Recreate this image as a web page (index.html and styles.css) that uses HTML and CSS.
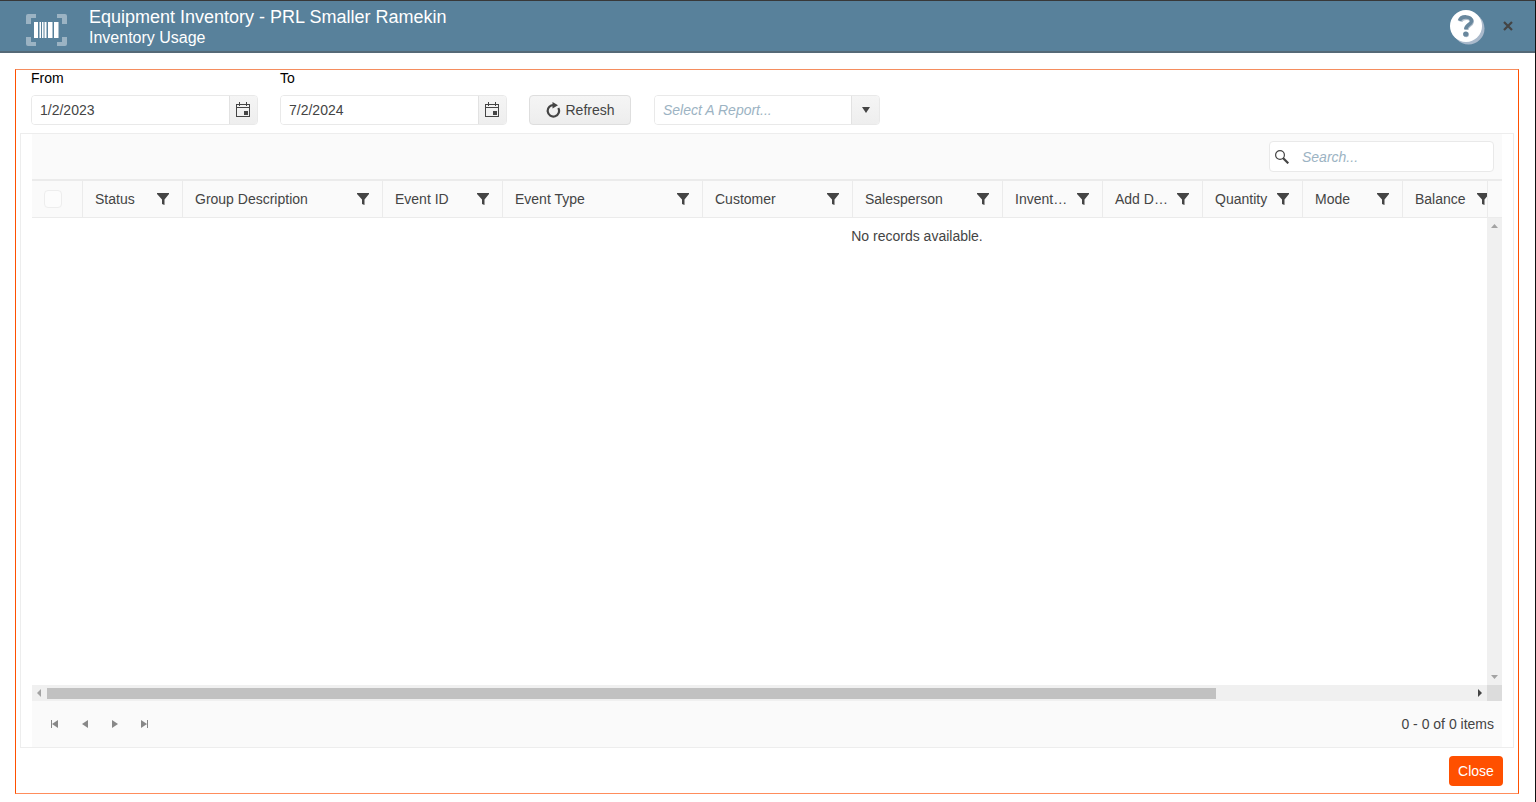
FILE: index.html
```html
<!DOCTYPE html>
<html lang="en">
<head>
<meta charset="utf-8">
<title>Equipment Inventory - Inventory Usage</title>
<link rel="stylesheet" href="styles.css">
</head>
<body>
<svg class="sprite" aria-hidden="true">
  <symbol id="filter" viewBox="0 0 12 12"><path d="M0 0h12v1L7.500 6.500V12L5 11V6.500L0 1z"/></symbol>
  <symbol id="calendar" viewBox="0 0 14 16"><path fill-rule="evenodd" d="M0 2h3V0h1V2h6V0h1V2H14v13H0zM1 3v2h12V3h-2v1h-1V3H4v1H3V3zM1 6v8h12V6zM8 9h4v4H8z"/></symbol>
  <symbol id="left" viewBox="0 0 6 8"><path d="M6 0v8L0 4z"/></symbol>
  <symbol id="right" viewBox="0 0 6 8"><path d="M0 0v8l6-4z"/></symbol>
</svg>
<div class="window">
  <header class="titlebar">
    <svg class="barcode" viewBox="0 0 41 33" aria-hidden="true">
      <path class="corners" d="M0 10V2q0-2 2-2h8v4H5v6zM31 0h8q2 0 2 2v8h-5V4h-5zM0 23h5v5h5v4H2q-2 0-2-2zM36 23h5v7q0 2-2 2h-8v-4h5z"/>
      <path fill="#fff" d="M8 8h4v16H8zM13.500 8H15v16h-1.500zM16 8h1.500v16H16zM18.500 8h2v16h-2zM22 8h4.500v16H22zM28 8h4.500v16H28z"/>
    </svg>
    <div class="titles">
      <h1 class="title">Equipment Inventory - PRL Smaller Ramekin</h1>
      <p class="subtitle">Inventory Usage</p>
    </div>
    <button class="icon-button help" type="button" aria-label="Help">
      <svg width="35" height="35" viewBox="0 0 35 35">
        <circle cx="18.500" cy="18.500" r="16" fill="#a9b9cb"/>
        <circle cx="16" cy="16" r="16" fill="#fff"/>
        <path d="M10.500 11.500c1.500-5 12-4.500 11.500.500-.5 3.500-5.500 3-5.500 8" fill="none" stroke="#b3c0cd" stroke-width="4"/>
        <path d="M9.500 10.800c1.500-5.500 12.500-5 12 .500-.5 3.500-5.700 3.200-5.700 8" fill="none" stroke="#68879d" stroke-width="3.600"/>
        <circle cx="16.300" cy="24.500" r="2.700" fill="#b3c0cd"/>
        <circle cx="15.700" cy="24" r="2.600" fill="#68879d"/>
      </svg>
    </button>
    <button class="icon-button dismiss" type="button" aria-label="Close window">
      <svg width="10" height="10" viewBox="0 0 10 10"><path d="M1 1l8 8M9 1L1 9" stroke="#444" stroke-width="2.200"/></svg>
    </button>
  </header>

  <main class="panel">
    <form class="criteria">
      <div class="field">
        <label for="from">From</label>
        <div class="picker">
          <input id="from" type="text" value="1/2/2023">
          <button type="button" aria-label="Choose from date"><svg width="14" height="16"><use href="#calendar"/></svg></button>
        </div>
      </div>
      <div class="field">
        <label for="to">To</label>
        <div class="picker">
          <input id="to" type="text" value="7/2/2024">
          <button type="button" aria-label="Choose to date"><svg width="14" height="16"><use href="#calendar"/></svg></button>
        </div>
      </div>
      <button class="refresh" type="button">
        <svg width="16" height="16" viewBox="0 0 16 16"><path d="M9 3.200A5.700 5.700 0 1 0 13.300 6" fill="none" stroke="#444" stroke-width="2.200"/><path d="M7.500 0l5.500 3.200-5.500 3.300z"/></svg>
        Refresh
      </button>
      <div class="picker report">
        <select aria-label="Report"><option>Select A Report...</option></select>
        <span class="caret" aria-hidden="true"><svg width="8" height="6" viewBox="0 0 8 6"><path d="M0 0h8L4 6z"/></svg></span>
      </div>
    </form>

    <section class="grid">
      <div class="toolbar">
        <div class="search">
          <svg width="14" height="14" viewBox="0 0 14 14"><circle cx="5" cy="5" r="4.400" fill="none" stroke="#444" stroke-width="1.200"/><path d="M8 8l5.300 5.300" stroke="#444" stroke-width="2.200"/></svg>
          <input type="search" placeholder="Search..." aria-label="Search">
        </div>
      </div>
      <div class="viewport">
        <div class="content">
          <table class="records">
            <colgroup><col class="w50"><col class="w100"><col class="w200"><col class="w120"><col class="w200"><col class="w150"><col class="w150"><col class="w100"><col class="w100"><col class="w100"><col class="w100"><col class="w100"><col class="w300"></colgroup>
            <thead>
              <tr>
                <th><input class="check" type="checkbox" aria-label="Select all"></th>
                <th><div class="head"><span>Status</span><svg><use href="#filter"/></svg></div></th>
                <th><div class="head"><span>Group Description</span><svg><use href="#filter"/></svg></div></th>
                <th><div class="head"><span>Event ID</span><svg><use href="#filter"/></svg></div></th>
                <th><div class="head"><span>Event Type</span><svg><use href="#filter"/></svg></div></th>
                <th><div class="head"><span>Customer</span><svg><use href="#filter"/></svg></div></th>
                <th><div class="head"><span>Salesperson</span><svg><use href="#filter"/></svg></div></th>
                <th><div class="head"><span>Invent…</span><svg><use href="#filter"/></svg></div></th>
                <th><div class="head"><span>Add D…</span><svg><use href="#filter"/></svg></div></th>
                <th><div class="head"><span>Quantity</span><svg><use href="#filter"/></svg></div></th>
                <th><div class="head"><span>Mode</span><svg><use href="#filter"/></svg></div></th>
                <th><div class="head wide"><span>Balance</span><svg><use href="#filter"/></svg></div></th>
                <th></th>
              </tr>
            </thead>
            <tbody><tr><td colspan="13">No records available.</td></tr></tbody>
          </table>
        </div>
        <div class="side">
          <div class="side-head"></div>
          <div class="track vertical">
            <svg width="7" height="4" viewBox="0 0 7 4"><path d="M0 4h7L3.500 0z"/></svg>
            <svg width="7" height="4" viewBox="0 0 7 4"><path d="M0 0h7L3.500 4z"/></svg>
          </div>
        </div>
      </div>
      <div class="scroll-row">
        <div class="track horizontal">
          <svg width="4" height="8" viewBox="0 0 4 8"><path d="M4 0v8L0 4z"/></svg>
          <div class="rail"><div class="thumb"></div></div>
          <svg class="active" width="4" height="8" viewBox="0 0 4 8"><path d="M0 0v8l4-4z"/></svg>
        </div>
        <div class="corner"></div>
      </div>
      <div class="pager">
        <nav class="pages" aria-label="Pages">
          <button type="button" aria-label="First page"><svg width="8" height="8" viewBox="0 0 8 8"><path d="M0 0h1v8H0zM7 0v8L1 4z"/></svg></button>
          <button type="button" aria-label="Previous page"><svg width="6" height="8"><use href="#left"/></svg></button>
          <button type="button" aria-label="Next page"><svg width="6" height="8"><use href="#right"/></svg></button>
          <button type="button" aria-label="Last page"><svg width="8" height="8" viewBox="0 0 8 8"><path d="M6 0h1v8H6zM0 0v8l6-4z"/></svg></button>
        </nav>
        <span>0 - 0 of 0 items</span>
      </div>
    </section>

    <footer class="actions"><button class="close" type="button">Close</button></footer>
  </main>
</div>
</body>
</html>
```
FILE: styles.css
```css
* { box-sizing: border-box; }

body {
  margin: 0;
  background: #fff;
  color: #444;
  font: 14px/20px "Liberation Sans", Arial, sans-serif;
}

button, input, select { font: inherit; color: inherit; }
button { padding: 0; cursor: pointer; }
svg { display: block; flex: none; fill: #444; }
.sprite { position: absolute; width: 0; height: 0; }

.window {
  display: flex;
  flex-direction: column;
  min-height: 100vh;
  border-top: 1px solid #383838;
  border-right: 1px solid #111;
}

/* Title bar */
.titlebar {
  display: flex;
  align-items: center;
  height: 52px;
  padding: 0 22px 0 26px;
  background: #58819b;
  border-bottom: 2px solid #556977;
  color: #fff;
}
.barcode { width: 41px; height: 33px; margin-top: 8px; }
.corners { fill: #9bb3c3; }
.titles { flex: 1; margin-left: 22px; padding-top: 2px; }
.title, .subtitle { margin: 0; font-weight: normal; }
.title { font-size: 18px; line-height: 22px; }
.subtitle { font-size: 16px; line-height: 20px; }
.icon-button { border: 0; background: none; }
.help { margin-right: 18px; padding-top: 2px; }

/* Bordered panel */
.panel {
  flex: 1;
  display: flex;
  flex-direction: column;
  margin: 16px 16px 8px 15px;
  padding: 0 4px;
  border: 1px solid #ff5000;
  border-top-color: #f58d5f;
  border-bottom-color: #ff8d5c;
}
.criteria { display: flex; align-items: flex-end; padding: 0 11px 8px; }
.field { width: 227px; margin-right: 22px; }
.field label { display: block; height: 25px; line-height: 17px; color: #000; }
.picker {
  display: flex;
  height: 30px;
  border: 1px solid #e9e9e9;
  border-radius: 4px;
  overflow: hidden;
}
.picker input {
  flex: 1;
  min-width: 0;
  padding: 0 8px;
  border: 0;
  background: #fff;
}
.picker button, .caret {
  display: flex;
  align-items: center;
  justify-content: center;
  width: 28px;
  border: 0;
  border-left: 1px solid #e2e2e2;
  background: linear-gradient(#f5f5f5, #eee);
}
.picker button { padding-right: 1px; }
.refresh {
  display: flex;
  align-items: center;
  justify-content: center;
  gap: 4px;
  width: 102px;
  height: 30px;
  margin-right: 23px;
  border: 1px solid #dedede;
  border-radius: 4px;
  background: linear-gradient(#f5f5f5, #ededed);
}
.report { width: 226px; }
.report select {
  flex: 1;
  min-width: 0;
  padding: 0 8px;
  border: 0;
  appearance: none;
  background: #fff;
  color: #9cb3c3;
  font-style: italic;
}

/* Grid */
.grid {
  flex: 1;
  display: flex;
  flex-direction: column;
  padding: 0 11px;
  border: 1px solid #ededed;
}
.toolbar {
  display: flex;
  justify-content: flex-end;
  padding: 7px 8px;
  background: #fafafa;
}
.search {
  display: flex;
  align-items: center;
  gap: 13px;
  width: 225px;
  height: 31px;
  padding: 0 5px;
  border: 1px solid #e9e9e9;
  border-radius: 4px;
  background: #fff;
}
.search input { flex: 1; min-width: 0; padding: 0; border: 0; background: none; }
.search input::placeholder { color: #9cb3c3; font-style: italic; }

.viewport { flex: 1; display: flex; }
.content { flex: 1; min-width: 0; overflow: hidden; contain: inline-size; }
.records { width: 1770px; table-layout: fixed; border-collapse: separate; border-spacing: 0; }
.w50 { width: 50px; }
.w100 { width: 100px; }
.w120 { width: 120px; }
.w150 { width: 150px; }
.w200 { width: 200px; }
.w300 { width: 300px; }
.records th {
  height: 39px;
  padding: 0 12px;
  border: solid #ebebeb;
  border-width: 2px 0 1px 1px;
  background: #fafafa;
  font-weight: normal;
  text-align: left;
}
.records th:first-child { border-left: 0; }
.records td { padding: 8px 0; text-align: center; }
.head { display: flex; align-items: center; justify-content: space-between; }
.head svg { width: 12px; height: 12px; }
.records th:not(:nth-child(12)) .head { padding-right: 1px; }
.head.wide { justify-content: flex-start; gap: 11px; }
.check {
  display: block;
  width: 18px;
  height: 18px;
  margin: 0;
  appearance: none;
  border: 1px solid #ededed;
  border-radius: 4px;
  background: #fcfcfc;
}

/* Scroll bars */
.side { display: flex; flex-direction: column; width: 15px; }
.side-head {
  height: 39px;
  border: solid #ebebeb;
  border-width: 2px 0 1px 1px;
  background: #fafafa;
}
.track { flex: 1; display: flex; align-items: center; justify-content: space-between; background: #f0f0f0; }
.track svg { fill: #a3a3a3; }
.track svg.active { fill: #444; }
.vertical { flex-direction: column; padding: 6px 0; }
.horizontal { padding: 0 5px; gap: 6px; }
.rail { flex: 1; }
.thumb { width: 82%; height: 11px; background: #c1c1c1; }
.scroll-row { display: flex; height: 16px; }
.corner { width: 15px; background: #dcdcdc; }

.pager {
  display: flex;
  align-items: center;
  justify-content: space-between;
  height: 46px;
  padding: 0 8px;
  background: #fafafa;
}
.pages { display: flex; }
.pages button {
  display: flex;
  align-items: center;
  justify-content: center;
  width: 30px;
  height: 30px;
  border: 0;
  background: none;
}
.pages svg { fill: #888; }

.actions { display: flex; justify-content: flex-end; padding: 8px 11px 7px; }
.close {
  width: 54px;
  height: 30px;
  border: 0;
  border-radius: 4px;
  background: #ff5000;
  color: #fff;
}
```
